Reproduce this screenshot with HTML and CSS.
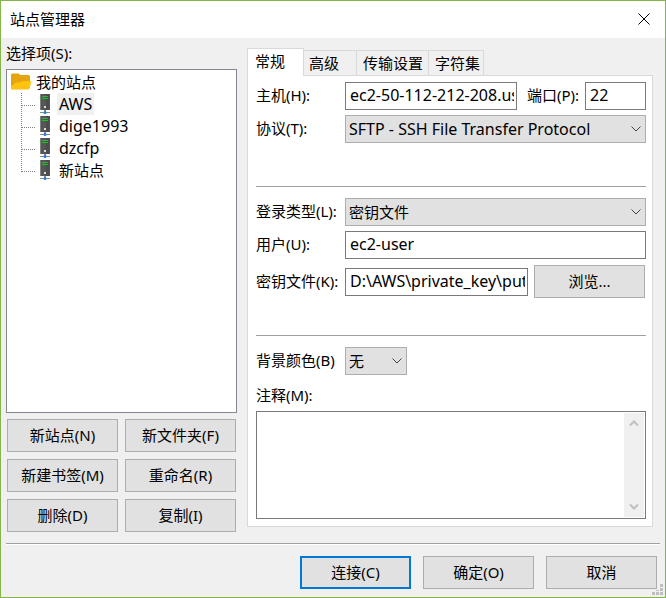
FILE: index.html
```html
<!DOCTYPE html>
<html lang="zh-CN">
<head>
<meta charset="utf-8">
<meta name="viewport" content="width=device-width, initial-scale=1">
<title>站点管理器</title>
<link rel="stylesheet" href="styles.css">
</head>
<body>
<svg class="sprite" aria-hidden="true">
  <symbol id="server" viewBox="0 0 12 21">
    <path d="M1 0h10v16H1z" fill="#565656"/>
    <path d="M1 0h1v16H1z" fill="#808080"/>
    <path d="M7 0h3v16H7z" fill="#4c4c4c"/>
    <path d="M3 2h6v1H3zM3 4h6v1H3z" fill="#21c02a"/>
    <path d="M5 12h2v2H5z" fill="#dcdcdc"/>
    <path d="M5 16h2v2H5z" fill="#8a8a8a"/>
    <path d="M1 18h10v1H1z" fill="#8a8a8a"/>
    <circle cx="6" cy="18.500" r="1.500" fill="#1f7fe0"/>
  </symbol>
  <symbol id="chevron" viewBox="0 0 10 6">
    <path d="M.5.5 5 5 9.500.5" fill="none" stroke="currentColor"/>
  </symbol>
</svg>
<div class="window">
  <header class="titlebar">
    <h1>站点管理器</h1>
    <button class="close" type="button" aria-label="关闭">
      <svg width="12" height="12" viewBox="0 0 12 12"><path d="M.5.5l11 11M11.500.5l-11 11" stroke="#000" fill="none"/></svg>
    </button>
  </header>

  <main class="content">
    <section class="sites">
      <h2 id="tree-label">选择项(S):</h2>
      <div class="tree" role="tree" aria-labelledby="tree-label">
        <div class="root" role="treeitem">
          <svg width="21" height="18" viewBox="0 0 21 18">
            <path d="M0 2q0-1.500 1.500-1.500h6l2 1.500h8q1.500 0 1.500 1.500V15H0z" fill="#e5a50e"/>
            <path d="M3.500 10 10 9l2-1h8.500L18.500 15.500q-.5 1-1.500 1H0V13q2.500-.5 3.500-3z" fill="#ffc20e"/>
          </svg>
          <span>我的站点</span>
        </div>
        <ul role="group">
          <li role="treeitem" aria-selected="true"><svg width="12" height="21"><use href="#server"/></svg><span class="name latin selected">AWS</span></li>
          <li role="treeitem"><svg width="12" height="21"><use href="#server"/></svg><span class="name latin">dige1993</span></li>
          <li role="treeitem"><svg width="12" height="21"><use href="#server"/></svg><span class="name latin">dzcfp</span></li>
          <li role="treeitem"><svg width="12" height="21"><use href="#server"/></svg><span class="name">新站点</span></li>
        </ul>
      </div>
      <div class="site-actions">
        <button class="btn" type="button">新站点(N)</button>
        <button class="btn" type="button">新文件夹(F)</button>
        <button class="btn" type="button">新建书签(M)</button>
        <button class="btn" type="button">重命名(R)</button>
        <button class="btn" type="button">删除(D)</button>
        <button class="btn" type="button">复制(I)</button>
      </div>
    </section>

    <section class="settings">
      <div class="tabs" role="tablist">
        <button class="tab active" type="button" role="tab" aria-selected="true">常规</button>
        <button class="tab" type="button" role="tab">高级</button>
        <button class="tab" type="button" role="tab">传输设置</button>
        <button class="tab" type="button" role="tab">字符集</button>
      </div>
      <form class="panel">
        <div class="row">
          <label class="lead" for="host">主机(H):</label>
          <input class="field latin grow" id="host" type="text" value="ec2-50-112-212-208.us-west-2.compute.amazonaws.com">
          <label class="port-label" for="port">端口(P):</label>
          <input class="field latin port" id="port" type="text" value="22">
        </div>
        <div class="row">
          <label class="lead" for="protocol">协议(T):</label>
          <div class="select grow">
            <select class="latin" id="protocol"><option>SFTP - SSH File Transfer Protocol</option></select>
            <svg width="10" height="6"><use href="#chevron"/></svg>
          </div>
        </div>
        <hr class="wide">
        <div class="row">
          <label class="lead" for="logon">登录类型(L):</label>
          <div class="select grow">
            <select id="logon"><option>密钥文件</option></select>
            <svg width="10" height="6"><use href="#chevron"/></svg>
          </div>
        </div>
        <div class="row">
          <label class="lead" for="user">用户(U):</label>
          <input class="field latin grow" id="user" type="text" value="ec2-user">
        </div>
        <div class="row key-row">
          <label class="lead" for="key">密钥文件(K):</label>
          <input class="field latin grow" id="key" type="text" value="D:\AWS\private_key\putty.ppk">
          <button class="btn browse" type="button">浏览...</button>
        </div>
        <hr>
        <div class="row">
          <label class="lead" for="color">背景颜色(B)</label>
          <div class="select color">
            <select id="color"><option>无</option></select>
            <svg width="10" height="6"><use href="#chevron"/></svg>
          </div>
        </div>
        <label class="notes-label" for="notes">注释(M):</label>
        <div class="notes">
          <textarea id="notes"></textarea>
          <div class="scrollbar" aria-hidden="true">
            <svg width="10" height="7" viewBox="0 0 10 7"><path d="M1 5.500 5 1.500l4 4" fill="none" stroke="#bfbfbf" stroke-width="2"/></svg>
            <svg width="10" height="7" viewBox="0 0 10 7"><path d="M1 1.500l4 4 4-4" fill="none" stroke="#bfbfbf" stroke-width="2"/></svg>
          </div>
        </div>
      </form>
    </section>
  </main>

  <footer class="footer">
    <button class="btn primary" type="button">连接(C)</button>
    <button class="btn" type="button">确定(O)</button>
    <button class="btn" type="button">取消</button>
  </footer>
  <svg class="grip" width="11" height="11" viewBox="0 0 11 11" aria-hidden="true">
    <path d="M8 0h3v3H8zM4 6h3v1H4zM8 4h3v3H8zM0 8h3v3H0zM4 8h3v3H4zM8 8h3v3H8z" fill="#bfbfbf"/>
  </svg>
</div>
</body>
</html>
```
FILE: styles.css
```css
* {
  box-sizing: border-box;
}

body {
  margin: 0;
  color: #000;
  font: 15px/22px "Noto Sans", "Noto Sans CJK SC", sans-serif;
}

button,
input,
select,
textarea {
  margin: 0;
  color: inherit;
  font: inherit;
  border-radius: 0;
}

h1,
h2 {
  margin: 0;
  font-size: 15px;
  font-weight: 400;
}

.latin {
  font-size: 16px;
}

.sprite {
  display: none;
}

.window {
  position: relative;
  display: flex;
  flex-direction: column;
  min-height: 100vh;
  background: #f0f0f0;
  border: 1px solid #84b547;
}

.titlebar {
  display: flex;
  align-items: center;
  justify-content: space-between;
  height: 37px;
  padding: 0 9px 2px;
  background: #fff;
}

.close {
  display: flex;
  padding: 6px;
  background: none;
  border: 0;
}

.content {
  flex: 1;
  display: grid;
  grid-template-columns: 231px minmax(0, 1fr);
  gap: 10px;
  padding: 0 12px 0 5px;
}

.sites {
  display: flex;
  flex-direction: column;
}

.sites h2 {
  padding: 4px 0 5px;
}

.tree {
  flex: 1;
  padding: 1px 4px;
  background: #fff;
  border: 1px solid #828790;
}

.root {
  display: flex;
  align-items: center;
  gap: 4px;
  height: 22px;
}

.tree ul {
  margin: 0;
  padding: 0 0 0 10px;
  list-style: none;
}

.tree li {
  display: flex;
  align-items: center;
  height: 22px;
}

.tree li::before {
  content: "";
  align-self: flex-start;
  width: 13px;
  height: 12px;
  margin-right: 4px;
  border: dotted #808080;
  border-width: 0 0 1px 1px;
}

.tree li:not(:last-child) {
  background: repeating-linear-gradient(#808080 0 1px, #fff 1px 2px) 0 0 / 1px 100% no-repeat;
}

.name {
  margin-left: 6px;
  padding: 0 2px;
}

.selected {
  background: #f0f0f0;
}

.site-actions {
  display: grid;
  grid-template-columns: 1fr 1fr;
  gap: 7px;
  padding: 6px 1px 0;
}

.btn {
  height: 33px;
  padding: 0 0 2px;
  background: #e1e1e1;
  border: 1px solid #adadad;
}

.primary {
  border: 2px solid #0078d7;
}

.settings {
  display: flex;
  flex-direction: column;
  min-width: 0;
  padding: 10px 0 5px;
}

.tabs {
  display: flex;
  align-items: flex-end;
  height: 27px;
}

.tab {
  height: 25px;
  padding: 0 5px 0 6px;
  background: #f0f0f0;
  border: solid #d9d9d9;
  border-width: 1px 1px 0 0;
}

.tab:nth-child(2) {
  padding: 0 17px 0 5px;
}

.tab:last-child {
  padding-right: 3px;
}

.tab.active {
  position: relative;
  height: 28px;
  margin-bottom: -1px;
  padding: 0 18px 4px 7px;
  background: #fff;
  border-width: 1px 1px 0;
}

.panel {
  flex: 1;
  display: flex;
  flex-direction: column;
  gap: 5px;
  padding: 6px 6px 7px 8px;
  background: #fff;
  border: 1px solid #d9d9d9;
}

.row {
  display: flex;
  align-items: center;
}

.lead,
.port-label {
  padding-bottom: 2px;
  white-space: nowrap;
}

.lead {
  width: 89px;
}

.grow {
  flex: 1;
  min-width: 0;
}

.field {
  height: 28px;
  padding: 0 2px 2px 4px;
  background: #fff;
  border: 1px solid #7a7a7a;
}

.port-label {
  margin: 0 6px 0 10px;
}

.port {
  width: 61px;
}

.select {
  position: relative;
}

.select select {
  display: block;
  width: 100%;
  height: 28px;
  padding: 0 24px 0 3px;
  appearance: none;
  background: #e1e1e1;
  border: 1px solid #adadad;
}

.select svg {
  position: absolute;
  top: 11px;
  right: 5px;
  color: #444;
  pointer-events: none;
}

.color {
  width: 62px;
}

.key-row {
  margin-top: 1px;
}

.browse {
  width: 111px;
  margin: 0 1px 0 6px;
}

hr {
  width: 100%;
  height: 1px;
  margin: 32px 0 6px;
  background: #a0a0a0;
  border: 0;
}

.wide {
  margin-top: 38px;
}

.notes-label {
  padding: 4px 0 0;
}

.notes {
  flex: 1;
  display: flex;
  min-height: 108px;
  padding: 1px;
  border: 1px solid #7a7a7a;
}

.notes textarea {
  flex: 1;
  min-width: 0;
  height: auto;
  padding: 3px;
  border: 0;
  outline: 0;
  resize: none;
}

.scrollbar {
  display: flex;
  flex-direction: column;
  align-items: center;
  justify-content: space-between;
  width: 20px;
  padding: 7px 0;
  background: #f0f0f0;
}

.footer {
  display: flex;
  justify-content: flex-end;
  gap: 12px;
  margin: 11px 5px 0;
  padding: 12px 3px 8px;
  border-top: 1px solid #a0a0a0;
  box-shadow: inset 0 1px #fff;
}

.footer .btn {
  width: 111px;
}

.grip {
  position: absolute;
  right: 2px;
  bottom: 2px;
}
```
